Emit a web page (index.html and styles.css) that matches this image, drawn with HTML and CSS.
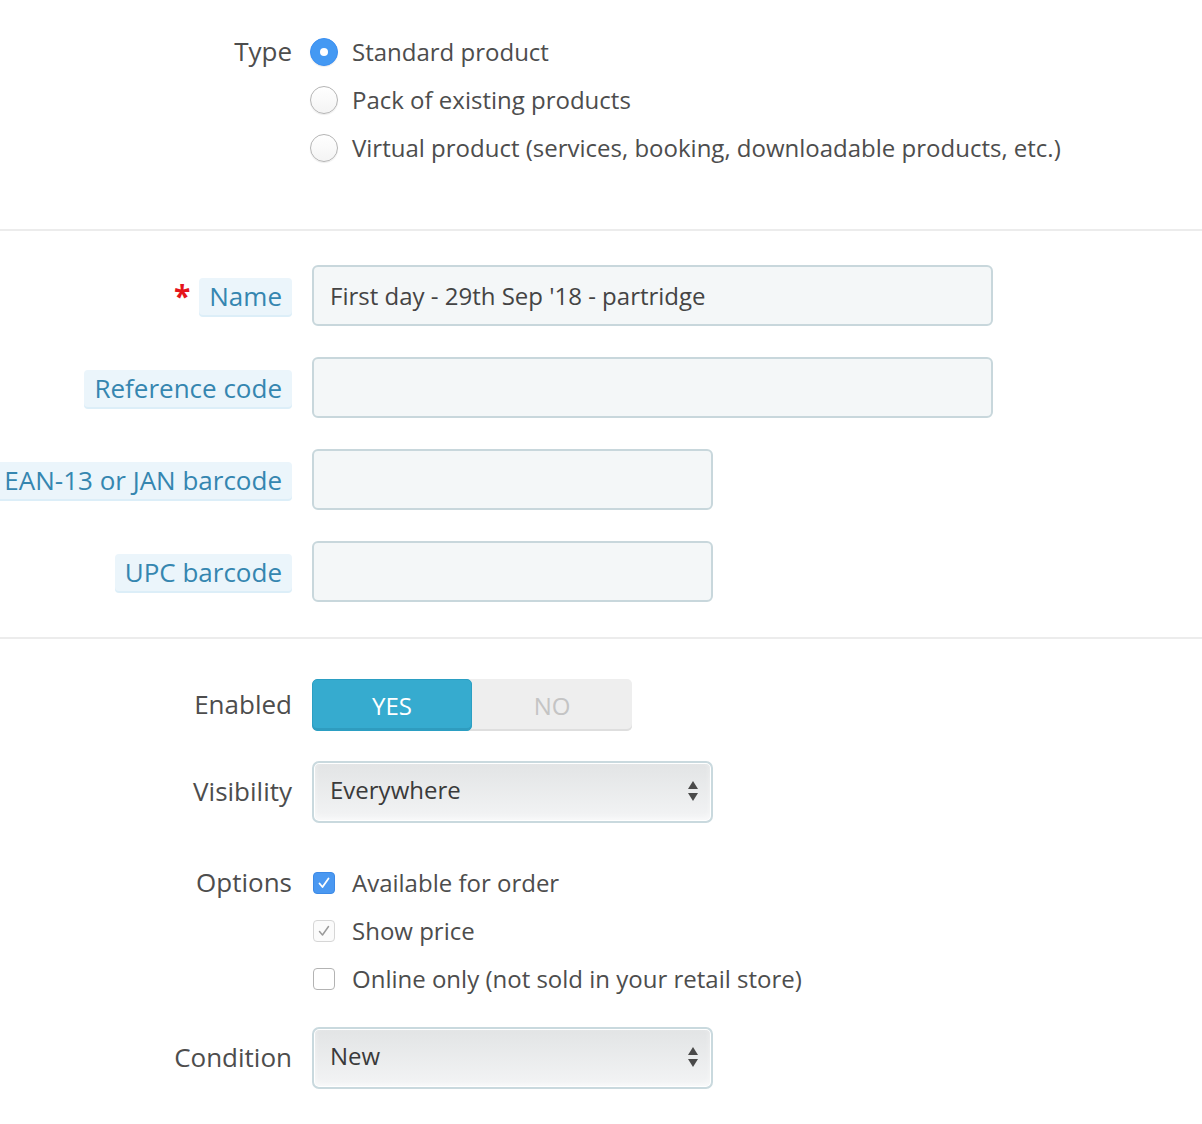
FILE: index.html
```html
<!DOCTYPE html>
<html>
<head>
<meta charset="utf-8">
<link rel="stylesheet" href="styles.css">
</head>
<body>
<div class="form">
  <section class="section sec-type">
    <div class="row row-type">
      <div class="label"><span class="plain">Type</span></div>
      <div class="control radios">
        <label class="radio-line"><span class="radio on"></span><span>Standard product</span></label>
        <label class="radio-line"><span class="radio"></span><span>Pack of existing products</span></label>
        <label class="radio-line"><span class="radio"></span><span>Virtual product (services, booking, downloadable products, etc.)</span></label>
      </div>
    </div>
  </section>
  <hr class="divider">
  <section class="section sec-fields">
    <div class="row field-row">
      <div class="label"><span class="star">*</span><span class="badge">Name</span></div>
      <div class="control"><div class="input wide">First day - 29th Sep '18 - partridge</div></div>
    </div>
    <div class="row field-row">
      <div class="label"><span class="badge">Reference code</span></div>
      <div class="control"><div class="input wide"></div></div>
    </div>
    <div class="row field-row">
      <div class="label"><span class="badge">EAN-13 or JAN barcode</span></div>
      <div class="control"><div class="input narrow"></div></div>
    </div>
    <div class="row field-row">
      <div class="label"><span class="badge">UPC barcode</span></div>
      <div class="control"><div class="input narrow"></div></div>
    </div>
  </section>
  <hr class="divider">
  <section class="section sec-opts">
    <div class="row toggle-row">
      <div class="label"><span class="plain">Enabled</span></div>
      <div class="control">
        <div class="toggle"><span class="yes">YES</span><span class="no">NO</span></div>
      </div>
    </div>
    <div class="row select-row">
      <div class="label"><span class="plain">Visibility</span></div>
      <div class="control">
        <div class="select"><span>Everywhere</span>
          <svg class="arrows" width="12" height="22" viewBox="0 0 12 22"><path d="M6 1 L11 9 L1 9 Z" fill="#4a4a4a"/><path d="M1 13 L11 13 L6 21 Z" fill="#4a4a4a"/></svg>
        </div>
      </div>
    </div>
    <div class="row options-row">
      <div class="label"><span class="plain">Options</span></div>
      <div class="control checks">
        <label class="check-line"><span class="check on"><svg width="14" height="14" viewBox="0 0 14 14"><path d="M2.5 7.5 L5.5 11 L11.5 2.5" fill="none" stroke="#fff" stroke-width="1.8" stroke-linecap="round" stroke-linejoin="round"/></svg></span><span>Available for order</span></label>
        <label class="check-line"><span class="check dis"><svg width="14" height="14" viewBox="0 0 14 14"><path d="M2.5 7.5 L5.5 11 L11.5 2.5" fill="none" stroke="#9a9a9a" stroke-width="1.5" stroke-linecap="round" stroke-linejoin="round"/></svg></span><span>Show price</span></label>
        <label class="check-line"><span class="check"></span><span>Online only (not sold in your retail store)</span></label>
      </div>
    </div>
    <div class="row select-row cond-row">
      <div class="label"><span class="plain">Condition</span></div>
      <div class="control">
        <div class="select"><span>New</span>
          <svg class="arrows" width="12" height="22" viewBox="0 0 12 22"><path d="M6 1 L11 9 L1 9 Z" fill="#4a4a4a"/><path d="M1 13 L11 13 L6 21 Z" fill="#4a4a4a"/></svg>
        </div>
      </div>
    </div>
  </section>
</div>
</body>
</html>
```
FILE: styles.css
```css
* { box-sizing: border-box; }
html, body { margin: 0; padding: 0; background: #fff; }
body {
  font-family: "Open Sans", "Liberation Sans", sans-serif;
  font-size: 24px;
  color: #4d4d4d;
  width: 1202px;
  height: 1124px;
  overflow: hidden;
}
.form { width: 1202px; }
.divider {
  border: 0;
  height: 2px;
  background: #ececec;
  margin: 0;
}
.row {
  display: flex;
  align-items: flex-start;
}
.label {
  width: 292px;
  flex: none;
  display: flex;
  justify-content: flex-end;
  align-items: center;
  white-space: nowrap;
  font-size: 26px;
}
.control {
  margin-left: 20px;
  flex: 1;
  min-width: 0;
}
.plain { color: #4d4d4d; line-height: 1; position: relative; top: -1px; }

/* Type */
.sec-type { padding: 28px 0 57px; }
.row-type .label { height: 48px; }
.radios { display: flex; flex-direction: column; margin-left: 18px; }
.radio-line {
  display: flex;
  align-items: center;
  height: 48px;
  white-space: nowrap;
  color: #4d4d4d;
}
.radio-line span:last-child { position: relative; top: -1px; }
.radio {
  width: 28px;
  height: 28px;
  border-radius: 50%;
  border: 1px solid #b5b5b5;
  background: linear-gradient(#fff, #f4f4f4);
  box-shadow: 0 1px 1px rgba(0,0,0,0.08);
  margin-right: 14px;
  flex: none;
  position: relative;
}
.radio.on {
  border-color: #3a8ff2;
  background: #4499f3;
}
.radio.on::after {
  content: "";
  position: absolute;
  width: 8px;
  height: 8px;
  border-radius: 50%;
  background: #fff;
  left: 9px;
  top: 9px;
}

/* Fields */
.sec-fields { padding: 34px 0 35px; }
.field-row { margin-bottom: 31px; }
.field-row:last-child { margin-bottom: 0; }
.field-row .label { height: 61px; }
.badge {
  display: inline-block;
  background: #ebf5fb;
  color: #3586b0;
  padding: 0 10px;
  height: 37px;
  line-height: 37px;
  border-radius: 4px;
  box-shadow: 0 2px 0 #dceef8;
  margin-top: 2px;
}
.star {
  color: #e5141b;
  margin-right: 9px;
  font-size: 30px;
  font-weight: 700;
  line-height: 1;
}
.input {
  height: 61px;
  background: #f4f7f8;
  border: 2px solid #c8d7dc;
  border-radius: 6px;
  padding: 0 16px;
  line-height: 57px;
  color: #444;
  white-space: nowrap;
}
.input.wide { width: 681px; }
.input.narrow { width: 401px; }

/* Options section */
.sec-opts { padding: 40px 0 0; }
.toggle-row .label { height: 51px; }
.toggle {
  display: flex;
  width: 320px;
  height: 52px;
  border-radius: 5px;
  background: #eeeeee;
  box-shadow: inset 0 -2px 0 #dedede;
  overflow: hidden;
}
.toggle span {
  flex: none;
  width: 160px;
  display: flex;
  align-items: center;
  justify-content: center;
  font-size: 24px;
}
.toggle .yes {
  background: #36abcf;
  color: #fff;
  border: 1px solid #2b9fc3;
  border-radius: 5px;
  box-shadow: inset 0 -2px 0 #2f9cbf;
}
.toggle .no { color: #c4c4c4; }

.select-row { margin-top: 30px; }
.select-row .label { height: 61px; }
.select {
  width: 401px;
  height: 62px;
  border: 2px solid #c9d9de;
  border-radius: 7px;
  background: linear-gradient(#e2e4e5, #f3f4f5);
  box-shadow: inset 0 0 0 1px #fff, inset 0 -3px 6px rgba(255,255,255,0.6);
  padding: 0 12px 0 16px;
  display: flex;
  align-items: center;
  justify-content: space-between;
  color: #3a3a3a;
  line-height: 1;
}
.select span { position: relative; top: -2px; }
.arrows { position: relative; top: -1px; }

.options-row { margin-top: 36px; }
.options-row .label { height: 48px; }
.checks { display: flex; flex-direction: column; }
.check-line {
  display: flex;
  align-items: center;
  height: 48px;
  white-space: nowrap;
  color: #4d4d4d;
}
.check-line span:last-child { position: relative; top: -1px; }
.check {
  width: 22px;
  height: 22px;
  border-radius: 4px;
  border: 1px solid #b3b3b3;
  background: #fff;
  margin-left: 1px;
  margin-right: 17px;
  flex: none;
  display: flex;
  align-items: center;
  justify-content: center;
}
.check.on { background: #4a98f1; border-color: #3d8ae6; }
.check.dis { border-color: #d6d6d6; background: #fbfbfb; }

.cond-row { margin-top: 24px; }
```
